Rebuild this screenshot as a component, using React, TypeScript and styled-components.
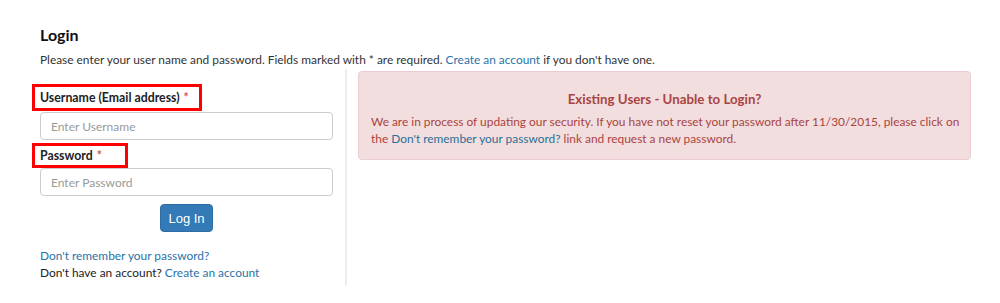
import React from 'react';
import styled, { createGlobalStyle } from 'styled-components';

const GlobalStyle = createGlobalStyle`
  body {
    margin: 0;
    background: #fff;
    font-family: Lato, "Liberation Sans", sans-serif;
    font-size: 11.9px;
    color: #333;
  }
`;

const Page = styled.div`
  padding: 25px 29px 0 40px;
`;

const Title = styled.h2`
  margin: 0;
  font-size: 16px;
  font-weight: 700;
  color: #111;
  line-height: 20px;
`;

const Intro = styled.p`
  margin: 6px 0 0;
  line-height: 17px;
  color: #333;
`;

const Link = styled.a`
  color: #2a72a8;
  text-decoration: none;
`;

const Columns = styled.div`
  display: flex;
  margin-top: 1px;
`;

const LeftCol = styled.div`
  width: 293px;
  padding: 15px 12px 5px 0;
  border-right: 2px solid #eee;
`;

const RightCol = styled.div`
  flex: 1;
  padding: 0 0 0 11px;
`;

const LabelBox = styled.div<{ $width: number; $height: number }>`
  width: ${(p) => p.$width}px;
  height: ${(p) => p.$height}px;
  margin-left: -8px;
  padding-left: 5px;
  border: 3px solid #ff0000;
  display: flex;
  align-items: center;
  font-size: 12.3px;
  font-weight: 700;
  color: #222;
`;

const Required = styled.span`
  color: #d9534f;
  margin-left: 4px;
`;

const Input = styled.input<{ $gap: number }>`
  display: block;
  box-sizing: border-box;
  width: 293px;
  height: 28px;
  margin: ${(p) => p.$gap}px 0 0;
  padding: 0 10px;
  border: 1px solid #ccc;
  border-radius: 4px;
  font-family: Lato, "Liberation Sans", sans-serif;
  font-size: 12px;
  color: #555;
  &::placeholder {
    color: #999;
  }
`;

const Field = styled.div`
  margin-top: 3px;
`;

const ButtonRow = styled.div`
  display: flex;
  justify-content: center;
  margin-top: 8px;
`;

const Button = styled.button`
  width: 53px;
  height: 28px;
  background: #337ab7;
  border: 1px solid #2e6da4;
  border-radius: 4px;
  color: #fff;
  font-family: "Liberation Sans", Arial, sans-serif;
  font-size: 13px;
  padding: 0;
`;

const Links = styled.div`
  margin-top: 15px;
  line-height: 17px;
  color: #222;
`;

const Alert = styled.div`
  margin-top: 2px;
  height: 89px;
  box-sizing: border-box;
  background: #f2dede;
  border: 1px solid #ebccd1;
  border-radius: 4px;
  padding: 19px 4px 0 12px;
  color: #a94442;
`;

const AlertTitle = styled.h3`
  margin: 0 0 6px;
  padding-right: 8px;
  text-align: center;
  font-size: 13.3px;
  font-weight: 700;
  line-height: 16px;
  color: #a94442;
`;

const AlertText = styled.p`
  margin: 0;
  line-height: 17px;
`;

const AlertLink = styled.a`
  color: #2a6f97;
  text-decoration: none;
`;

export default function App() {
  return (
    <>
      <GlobalStyle />
      <Page>
        <Title>Login</Title>
        <Intro>
          Please enter your user name and password. Fields marked with * are required.{' '}
          <Link href="#">Create an account</Link> if you don't have one.
        </Intro>
        <Columns>
          <LeftCol>
            <LabelBox $width={159} $height={21}>
              Username (Email address)<Required>*</Required>
            </LabelBox>
            <Input $gap={1} placeholder="Enter Username" />
            <Field>
              <LabelBox $width={85} $height={19}>
                Password<Required>*</Required>
              </LabelBox>
              <Input $gap={0} placeholder="Enter Password" type="password" />
            </Field>
            <ButtonRow>
              <Button>Log In</Button>
            </ButtonRow>
            <Links>
              <Link href="#">Don't remember your password?</Link>
              <br />
              Don't have an account? <Link href="#">Create an account</Link>
            </Links>
          </LeftCol>
          <RightCol>
            <Alert>
              <AlertTitle>Existing Users - Unable to Login?</AlertTitle>
              <AlertText>
                We are in process of updating our security. If you have not reset your password after
                11/30/2015, please click on the <AlertLink href="#">Don't remember your password?</AlertLink>{' '}
                link and request a new password.
              </AlertText>
            </Alert>
          </RightCol>
        </Columns>
      </Page>
    </>
  );
}
